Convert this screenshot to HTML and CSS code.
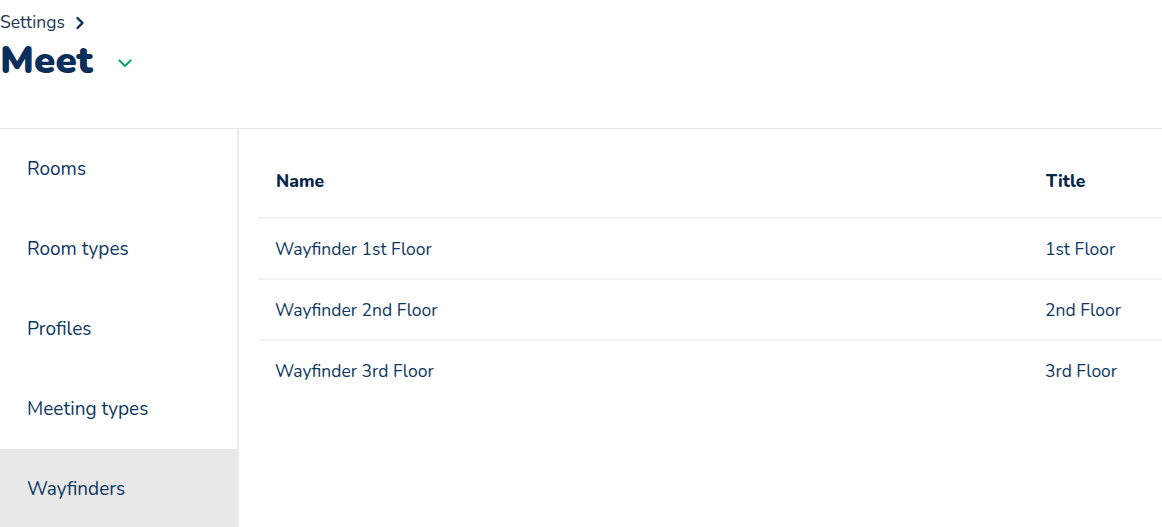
FILE: index.html
```html
<!DOCTYPE html>
<html>
<head>
<meta charset="utf-8">
<link rel="stylesheet" href="styles.css">
</head>
<body>
<header class="page-header">
  <div class="breadcrumb">
    <span>Settings</span>
    <svg class="crumb-chevron" width="10" height="14" viewBox="0 0 10 14"><path d="M2.5 2 L7.5 7 L2.5 12" fill="none" stroke="#0b2e5a" stroke-width="2.4" stroke-linecap="round" stroke-linejoin="round"/></svg>
  </div>
  <div class="title-row">
    <h1 class="title">Meet</h1>
    <svg class="title-chevron" width="16" height="12" viewBox="0 0 16 12"><path d="M2.5 3.5 L8 9 L13.5 3.5" fill="none" stroke="#13a870" stroke-width="2.2" stroke-linecap="round" stroke-linejoin="round"/></svg>
  </div>
</header>
<div class="layout">
  <nav class="sidebar">
    <a class="nav-item">Rooms</a>
    <a class="nav-item">Room types</a>
    <a class="nav-item">Profiles</a>
    <a class="nav-item">Meeting types</a>
    <a class="nav-item active">Wayfinders</a>
  </nav>
  <main class="content">
    <table class="table">
      <thead>
        <tr><th class="col-name">Name</th><th class="col-title">Title</th></tr>
      </thead>
      <tbody>
        <tr><td>Wayfinder 1st Floor</td><td>1st Floor</td></tr>
        <tr><td>Wayfinder 2nd Floor</td><td>2nd Floor</td></tr>
        <tr><td>Wayfinder 3rd Floor</td><td>3rd Floor</td></tr>
      </tbody>
    </table>
  </main>
</div>
</body>
</html>
```
FILE: styles.css
```css
html, body {
  margin: 0;
  padding: 0;
  background: #fff;
  font-family: "Nunito", "Lato", "Noto Sans", sans-serif;
  color: #0d3863;
  overflow: hidden;
}
.page-header {
  height: 128px;
  border-bottom: 1px solid #e6e6e6;
}
.breadcrumb {
  display: flex;
  align-items: center;
  gap: 10px;
  height: 24px;
  padding-top: 10px;
  font-size: 17.5px;
  color: #1d3655;
}
.crumb-chevron { margin-top: 1px; }
.title-row {
  display: flex;
  align-items: center;
  gap: 24px;
  margin-top: 3px;
}
.title {
  margin: 0;
  font-size: 38.5px;
  font-weight: 900;
  color: #0b2e5a;
  line-height: 48px;
}
.title-chevron { margin-top: 4px; }
.layout {
  display: flex;
  height: 398px;
}
.sidebar {
  width: 237px;
  border-right: 2px solid #ebebeb;
  display: flex;
  flex-direction: column;
  flex-shrink: 0;
}
.nav-item {
  height: 80px;
  flex-shrink: 0;
  display: flex;
  align-items: center;
  padding-left: 27px;
  font-size: 19px;
  color: #0d3863;
}
.nav-item.active {
  background: #e8e8e8;
}
.content {
  flex: 1;
  padding-left: 19px;
}
.table {
  width: 920px;
  border-collapse: collapse;
  margin-top: 12px;
}
.table th {
  text-align: left;
  font-weight: 800;
  font-size: 17.5px;
  color: #07264a;
  height: 72px;
  padding: 4px 0 0 18px;
  border-bottom: 2px solid #f2f2f2;
}
.table td {
  font-size: 17.5px;
  height: 59px;
  padding: 0 0 0 17px;
  border-bottom: 2px solid #f2f2f2;
}
.table tbody tr:last-child td { border-bottom: none; }
.col-name { width: 752px; }
```
